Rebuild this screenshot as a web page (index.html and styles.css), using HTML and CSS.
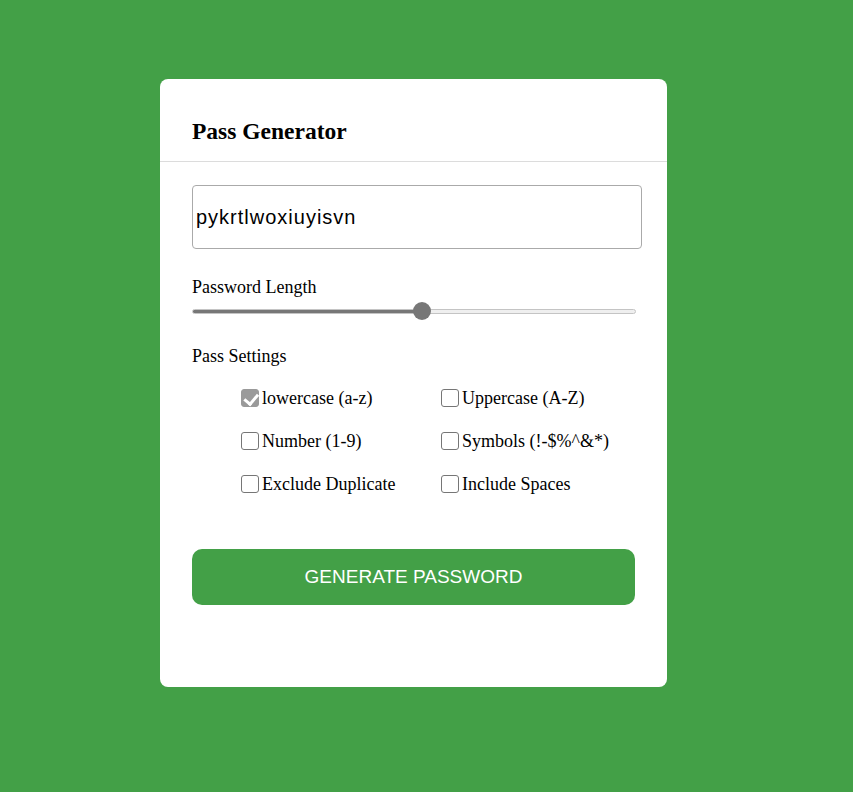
FILE: index.html
```html
<!DOCTYPE html>
<html lang="en">
<head>
<meta charset="utf-8">
<title>Pass Generator</title>
<link rel="stylesheet" href="styles.css">
</head>
<body>
<div class="card">
  <div class="card-header">
    <h2 class="title">Pass Generator</h2>
  </div>
  <div class="card-body">
    <input class="pass-output" type="text" value="pykrtlwoxiuyisvn" readonly>
    <div class="field-label length-label">Password Length</div>
    <input class="length-range" type="range" min="0" max="1000" value="520">
    <div class="field-label settings-label">Pass Settings</div>
    <div class="options">
      <label class="option"><input type="checkbox" checked><span>lowercase (a-z)</span></label>
      <label class="option"><input type="checkbox"><span>Uppercase (A-Z)</span></label>
      <label class="option"><input type="checkbox"><span>Number (1-9)</span></label>
      <label class="option"><input type="checkbox"><span>Symbols (!-$%^&amp;*)</span></label>
      <label class="option"><input type="checkbox"><span>Exclude Duplicate</span></label>
      <label class="option"><input type="checkbox"><span>Include Spaces</span></label>
    </div>
    <button class="generate-btn" type="button">GENERATE PASSWORD</button>
  </div>
</div>
</body>
</html>
```

FILE: styles.css
```css
* { box-sizing: border-box; }

html, body {
  margin: 0;
  background: #43a047;
}

body {
  padding: 79px 0 0 160px;
  min-height: 792px;
  font-family: "Liberation Serif", "Times New Roman", serif;
  color: #000;
}

.card {
  width: 507px;
  height: 608px;
  background: #fff;
  border-radius: 8px;
}

.card-header {
  padding: 39px 32px 17px;
  border-bottom: 1px solid #dcdcdc;
}

.title {
  margin: 0;
  font-size: 23.5px;
  line-height: 26px;
  font-weight: bold;
}

.card-body {
  padding: 23px 0 0 32px;
}

.pass-output {
  display: block;
  width: 450px;
  height: 64px;
  margin: 0;
  padding: 0 3px;
  border: 1px solid #aaa;
  border-radius: 4px;
  font-family: "Liberation Sans", Arial, sans-serif;
  font-size: 20px;
  letter-spacing: 1px;
  color: #000;
  outline: none;
}

.field-label {
  font-size: 18px;
  line-height: 20px;
}

.length-label {
  margin-top: 28px;
}

.length-range {
  -webkit-appearance: none;
  appearance: none;
  display: block;
  width: 444px;
  height: 18px;
  margin: 5px 0 0 0;
  background: transparent;
}

.length-range::-webkit-slider-runnable-track {
  height: 5px;
  border: 1px solid #c4c4c4;
  border-radius: 3px;
  background: linear-gradient(to right, #777 0, #777 52%, #efefef 52%, #efefef 100%);
}

.length-range::-webkit-slider-thumb {
  -webkit-appearance: none;
  appearance: none;
  width: 18px;
  height: 18px;
  margin-top: -7.5px;
  border-radius: 50%;
  background: #777;
  border: none;
}

.settings-label {
  margin-top: 26px;
}

.options {
  display: grid;
  grid-template-columns: 200px 200px;
  grid-auto-rows: 43px;
  margin-top: 10px;
  padding-left: 49px;
}

.option {
  display: flex;
  align-items: center;
  font-size: 18px;
  line-height: 20px;
}

.option input {
  -webkit-appearance: none;
  appearance: none;
  position: relative;
  flex: none;
  width: 18px;
  height: 18px;
  margin: 0 3px 0 0;
  border: 1px solid #767676;
  border-radius: 3px;
  background: #fff;
}

.option input:checked {
  background: #9a9a9a;
  border-color: #9a9a9a;
}

.option input:checked::after {
  content: "";
  position: absolute;
  left: 4.5px;
  top: 1px;
  width: 5.5px;
  height: 10.5px;
  border: solid #fff;
  border-width: 0 3px 3px 0;
  transform: rotate(40deg);
}

.generate-btn {
  display: block;
  width: 443px;
  height: 56px;
  margin-top: 44px;
  border: none;
  border-radius: 10px;
  background: #43a047;
  color: #fff;
  font-family: "Liberation Sans", Arial, sans-serif;
  font-size: 19px;
  cursor: pointer;
}
```
